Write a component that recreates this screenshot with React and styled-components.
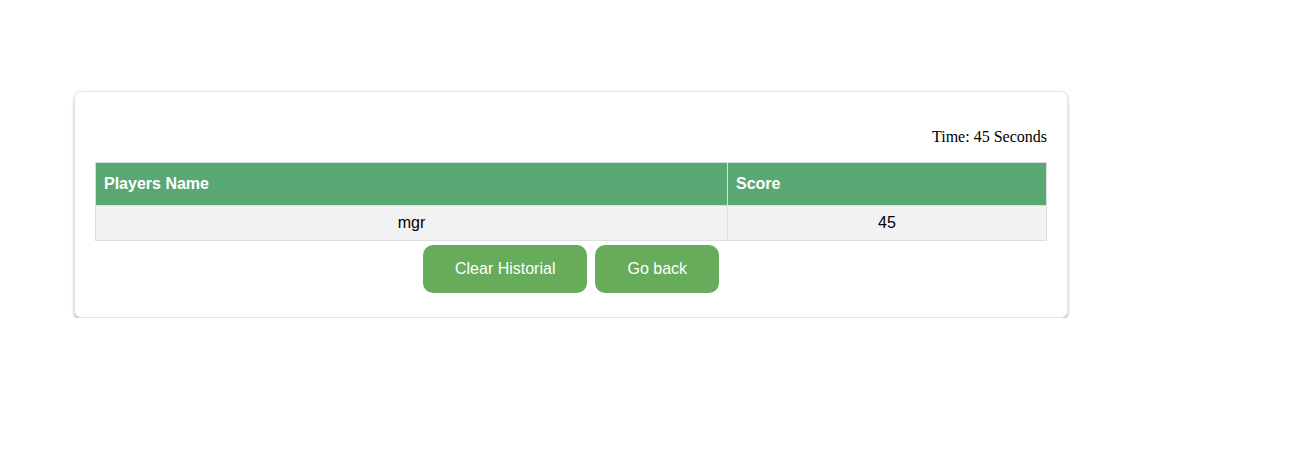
import React from "react";
import styled, { createGlobalStyle } from "styled-components";

const GlobalStyle = createGlobalStyle`
	body {
		margin: 0;
		background: #fff;
		font-family: "Liberation Serif", "Times New Roman", serif;
	}
`;

const players = [{ name: "mgr", score: 45 }];

const App = () => {
	return (
		<>
			<GlobalStyle />
			<Page>
				<Card>
					<TimeText>Time: 45 Seconds</TimeText>
					<ScoreTable>
						<thead>
							<tr>
								<HeadCell $wide>Players Name</HeadCell>
								<HeadCell>Score</HeadCell>
							</tr>
						</thead>
						<tbody>
							{players.map((p) => (
								<tr key={p.name}>
									<Cell>{p.name}</Cell>
									<Cell>{p.score}</Cell>
								</tr>
							))}
						</tbody>
					</ScoreTable>
					<Actions>
						<Button>Clear Historial</Button>
						<Button>Go back</Button>
					</Actions>
				</Card>
			</Page>
		</>
	);
};

const Page = styled.div`
	padding: 91px 0 0 74px;
`;

const Card = styled.div`
	width: 952px;
	padding: 20px;
	border: 1px solid #e4e4e4;
	border-radius: 7px;
	background: #fff;
	box-shadow: 0 2px 3px rgba(0, 0, 0, 0.28);
`;

const TimeText = styled.p`
	margin: 16px 0;
	text-align: right;
	font-size: 16px;
	line-height: 18px;
	color: #000;
`;

const ScoreTable = styled.table`
	width: 100%;
	border-collapse: collapse;
	font-family: "Liberation Sans", Arial, sans-serif;
	font-size: 16px;
`;

const HeadCell = styled.th`
	width: ${(p) => (p.$wide ? "615px" : "auto")};
	padding: 12px 8px;
	line-height: 18px;
	text-align: left;
	font-weight: bold;
	color: #fff;
	background: #59a773;
	border: 1px solid #dddddd;
`;

const Cell = styled.td`
	padding: 8px;
	line-height: 18px;
	text-align: center;
	color: #000;
	background: #f2f2f2;
	border: 1px solid #dddddd;
`;

const Actions = styled.div`
	display: flex;
	justify-content: center;
	gap: 8px;
	margin-top: 4px;
	margin-bottom: 4px;
`;

const Button = styled.button`
	padding: 15px 32px;
	border: none;
	border-radius: 10px;
	background: #67ac5b;
	color: #fff;
	font-family: "Liberation Sans", Arial, sans-serif;
	font-size: 16px;
	line-height: 18px;
	cursor: pointer;
`;

export default App;
